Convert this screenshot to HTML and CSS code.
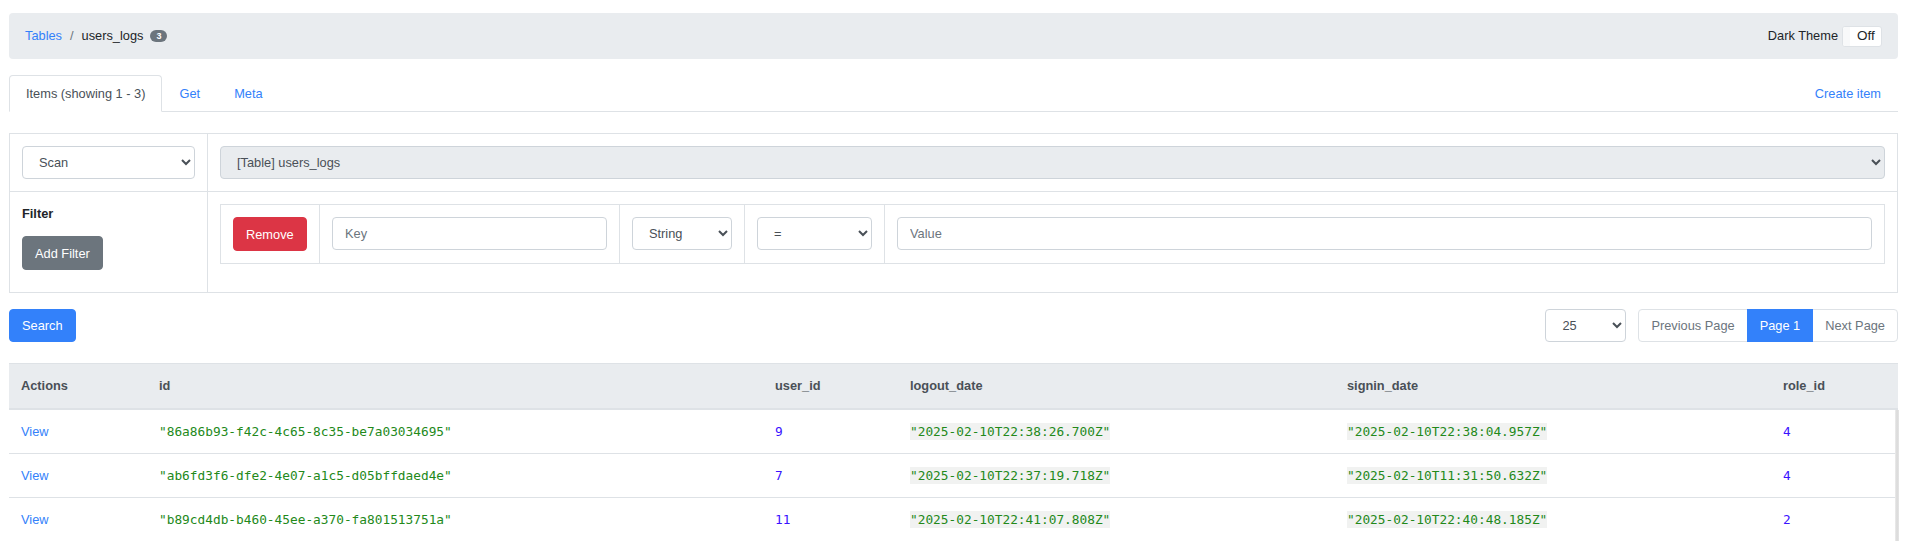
FILE: index.html
```html
<!DOCTYPE html>
<html lang="en">
<head>
<meta charset="utf-8">
<title>users_logs</title>
<link rel="stylesheet" href="styles.css">
</head>
<body>
<div class="page">
  <nav class="topbar">
    <ol class="crumbs">
      <li><a href="#" class="link">Tables</a></li>
      <li class="sep">/</li>
      <li class="current">users_logs <span class="badge">3</span></li>
    </ol>
    <div class="theme">
      <span>Dark Theme</span>
      <span class="toggle"><span class="toggle-knob"></span><span class="toggle-text">Off</span></span>
    </div>
  </nav>

  <div class="tabs">
    <a href="#" class="tab active">Items (showing 1 - 3)</a>
    <a href="#" class="tab">Get</a>
    <a href="#" class="tab">Meta</a>
    <a href="#" class="tab create">Create item</a>
  </div>

  <div class="query">
    <div class="qcell qleft qtop">
      <select class="control select"><option>Scan</option></select>
    </div>
    <div class="qcell qright qtop">
      <select class="control select select-gray"><option>[Table] users_logs</option></select>
    </div>
    <div class="qcell qleft">
      <div class="filter-label">Filter</div>
      <button class="btn btn-gray">Add Filter</button>
    </div>
    <div class="qcell qright">
      <div class="filter-row">
        <div class="fcell"><button class="btn btn-red">Remove</button></div>
        <div class="fcell"><input class="control input" placeholder="Key"></div>
        <div class="fcell"><select class="control select"><option>String</option></select></div>
        <div class="fcell"><select class="control select"><option>=</option></select></div>
        <div class="fcell"><input class="control input" placeholder="Value"></div>
      </div>
    </div>
  </div>

  <div class="toolbar">
    <button class="btn btn-blue">Search</button>
    <div class="pager-group">
      <select class="control select per-page"><option>25</option></select>
      <div class="pager">
        <span class="pg">Previous Page</span>
        <span class="pg pg-active">Page 1</span>
        <span class="pg">Next Page</span>
      </div>
    </div>
  </div>

  <div class="results">
    <table class="grid">
      <colgroup>
        <col class="c-actions"><col class="c-id"><col class="c-user"><col class="c-logout"><col class="c-signin"><col class="c-role">
      </colgroup>
      <thead>
        <tr><th>Actions</th><th>id</th><th>user_id</th><th>logout_date</th><th>signin_date</th><th>role_id</th></tr>
      </thead>
      <tbody>
        <tr>
          <td><a href="#" class="link">View</a></td>
          <td><span class="str">"86a86b93-f42c-4c65-8c35-be7a03034695"</span></td>
          <td><span class="num">9</span></td>
          <td><span class="str date">"2025-02-10T22:38:26.700Z"</span></td>
          <td><span class="str date">"2025-02-10T22:38:04.957Z"</span></td>
          <td><span class="num">4</span></td>
        </tr>
        <tr>
          <td><a href="#" class="link">View</a></td>
          <td><span class="str">"ab6fd3f6-dfe2-4e07-a1c5-d05bffdaed4e"</span></td>
          <td><span class="num">7</span></td>
          <td><span class="str date">"2025-02-10T22:37:19.718Z"</span></td>
          <td><span class="str date">"2025-02-10T11:31:50.632Z"</span></td>
          <td><span class="num">4</span></td>
        </tr>
        <tr>
          <td><a href="#" class="link">View</a></td>
          <td><span class="str">"b89cd4db-b460-45ee-a370-fa801513751a"</span></td>
          <td><span class="num">11</span></td>
          <td><span class="str date">"2025-02-10T22:41:07.808Z"</span></td>
          <td><span class="str date">"2025-02-10T22:40:48.185Z"</span></td>
          <td><span class="num">2</span></td>
        </tr>
      </tbody>
    </table>
    <div class="scroll-strip"></div>
  </div>
</div>
</body>
</html>
```

FILE: styles.css
```css
* { box-sizing: border-box; }

html, body {
  margin: 0;
  padding: 0;
  background: #fff;
}

body {
  font-family: "Liberation Sans", Arial, sans-serif;
  font-size: 12.8px;
  line-height: 19.2px;
  color: #212529;
}

.page {
  width: 1898px;
  padding: 13px 0 0 9px;
}

.link {
  color: #3381fa;
  text-decoration: none;
}

/* top bar */
.topbar {
  height: 46px;
  background: #e9ecef;
  border-radius: 4px;
  padding: 0 16px;
  display: flex;
  align-items: center;
  justify-content: space-between;
}

.crumbs {
  list-style: none;
  margin: 0;
  padding: 0;
  display: flex;
  align-items: center;
}

.sep {
  color: #6c757d;
  padding: 0 8px;
}

.current {
  display: flex;
  align-items: center;
}

.badge {
  display: inline-flex;
  align-items: center;
  justify-content: center;
  margin-left: 7px;
  width: 17px;
  height: 12px;
  border-radius: 6px;
  background: #6c757d;
  color: #fff;
  font-size: 9px;
  font-weight: 700;
  line-height: 12px;
}

.theme {
  display: flex;
  align-items: center;
  gap: 4px;
}

.toggle {
  display: flex;
  align-items: center;
  width: 40px;
  height: 21px;
  border: 1px solid #dee2e6;
  border-radius: 3px;
  background: #fff;
  overflow: hidden;
}

.toggle-knob {
  width: 7px;
  height: 100%;
  background: #f8f9fa;
}

.toggle-text {
  margin-left: 7px;
  font-size: 13.5px;
  color: #212529;
}

/* tabs */
.tabs {
  display: flex;
  margin-top: 16px;
  border-bottom: 1px solid #dee2e6;
  height: 37px;
}

.tab {
  display: flex;
  align-items: center;
  height: 37px;
  padding: 0 16px;
  border: 1px solid transparent;
  border-top-left-radius: 4px;
  border-top-right-radius: 4px;
  color: #3381fa;
  text-decoration: none;
  margin-bottom: -1px;
}

.tab.active {
  color: #495057;
  background: #fff;
  border-color: #dee2e6 #dee2e6 #fff;
}

.tab.create {
  margin-left: auto;
}

/* query panel */
.query {
  margin-top: 21px;
  display: grid;
  grid-template-columns: 197px 1fr;
  border: 1px solid #dee2e6;
}

.qcell {
  padding: 12px;
}

.qtop {
  border-bottom: 1px solid #dee2e6;
}

.qright {
  border-left: 1px solid #dee2e6;
}

.filter-label {
  font-weight: 700;
  margin-bottom: 13px;
}

.control {
  display: block;
  width: 100%;
  height: 33px;
  border: 1px solid #ced4da;
  border-radius: 4px;
  background-color: #fff;
  font-family: "Liberation Sans", Arial, sans-serif;
  font-size: 12.8px;
  color: #495057;
  padding: 0 12px;
  margin: 0;
}

.select {
  padding: 0 8px 0 12px;
}

.select-gray {
  background-color: #e9ecef;
}

.input::placeholder {
  color: #6c757d;
}

.filter-row {
  display: grid;
  grid-template-columns: 98px 300px 125px 140px 1fr;
  border: 1px solid #dee2e6;
  margin-bottom: 16px;
}

.fcell {
  padding: 12px;
  border-left: 1px solid #dee2e6;
}

.fcell:first-child {
  border-left: none;
}

/* buttons */
.btn {
  display: inline-flex;
  align-items: center;
  justify-content: center;
  height: 34px;
  padding: 0 12px;
  border: 1px solid transparent;
  border-radius: 4px;
  font-family: "Liberation Sans", Arial, sans-serif;
  font-size: 12.8px;
  color: #fff;
  cursor: pointer;
}

.btn-gray { background: #6c757d; border-color: #6c757d; }
.btn-red { background: #dc3545; border-color: #dc3545; }
.btn-blue { background: #3381fa; border-color: #3381fa; height: 33px; }

/* toolbar */
.toolbar {
  margin-top: 16px;
  display: flex;
  align-items: center;
  justify-content: space-between;
}

.pager-group {
  display: flex;
  align-items: center;
  gap: 12px;
}

.per-page {
  width: 81px;
}

.pager {
  display: flex;
  height: 33px;
}

.pg {
  display: flex;
  align-items: center;
  padding: 0 12px;
  border: 1px solid #dee2e6;
  margin-left: -1px;
  color: #6c757d;
  background: #fff;
}

.pg:first-child {
  margin-left: 0;
  border-radius: 4px 0 0 4px;
}

.pg:last-child {
  border-radius: 0 4px 4px 0;
}

.pg-active {
  background: #3381fa;
  border-color: #3381fa;
  color: #fff;
  position: relative;
}

/* results table */
.results {
  position: relative;
  margin-top: 21px;
}

.grid {
  width: 1889px;
  border-collapse: collapse;
  table-layout: fixed;
}

.c-actions { width: 138px; }
.c-id { width: 616px; }
.c-user { width: 135px; }
.c-logout { width: 437px; }
.c-signin { width: 436px; }
.c-role { width: 127px; }

.grid th {
  text-align: left;
  background: #e9ecef;
  color: #495057;
  font-weight: 700;
  padding: 12px;
  line-height: 20px;
  border-top: 1px solid #dee2e6;
  border-bottom: 2px solid #dee2e6;
}

.grid td {
  padding: 12px;
  line-height: 19px;
  border-top: 1px solid #dee2e6;
  vertical-align: middle;
}

.grid tbody tr:first-child td {
  border-top: none;
}

.str {
  font-family: "DejaVu Sans Mono", "Liberation Mono", monospace;
  font-size: 12.8px;
  color: #23891a;
}

.date {
  background: #f1f2f1;
  padding: 1px 0;
}

.num {
  font-family: "DejaVu Sans Mono", "Liberation Mono", monospace;
  font-size: 12.8px;
  color: #3a12ff;
}

.scroll-strip {
  position: absolute;
  right: -1px;
  top: 47px;
  bottom: 0;
  width: 4px;
  background: linear-gradient(to right, #ececec, #d9d9d9 50%, #e6e6e6);
}
```
